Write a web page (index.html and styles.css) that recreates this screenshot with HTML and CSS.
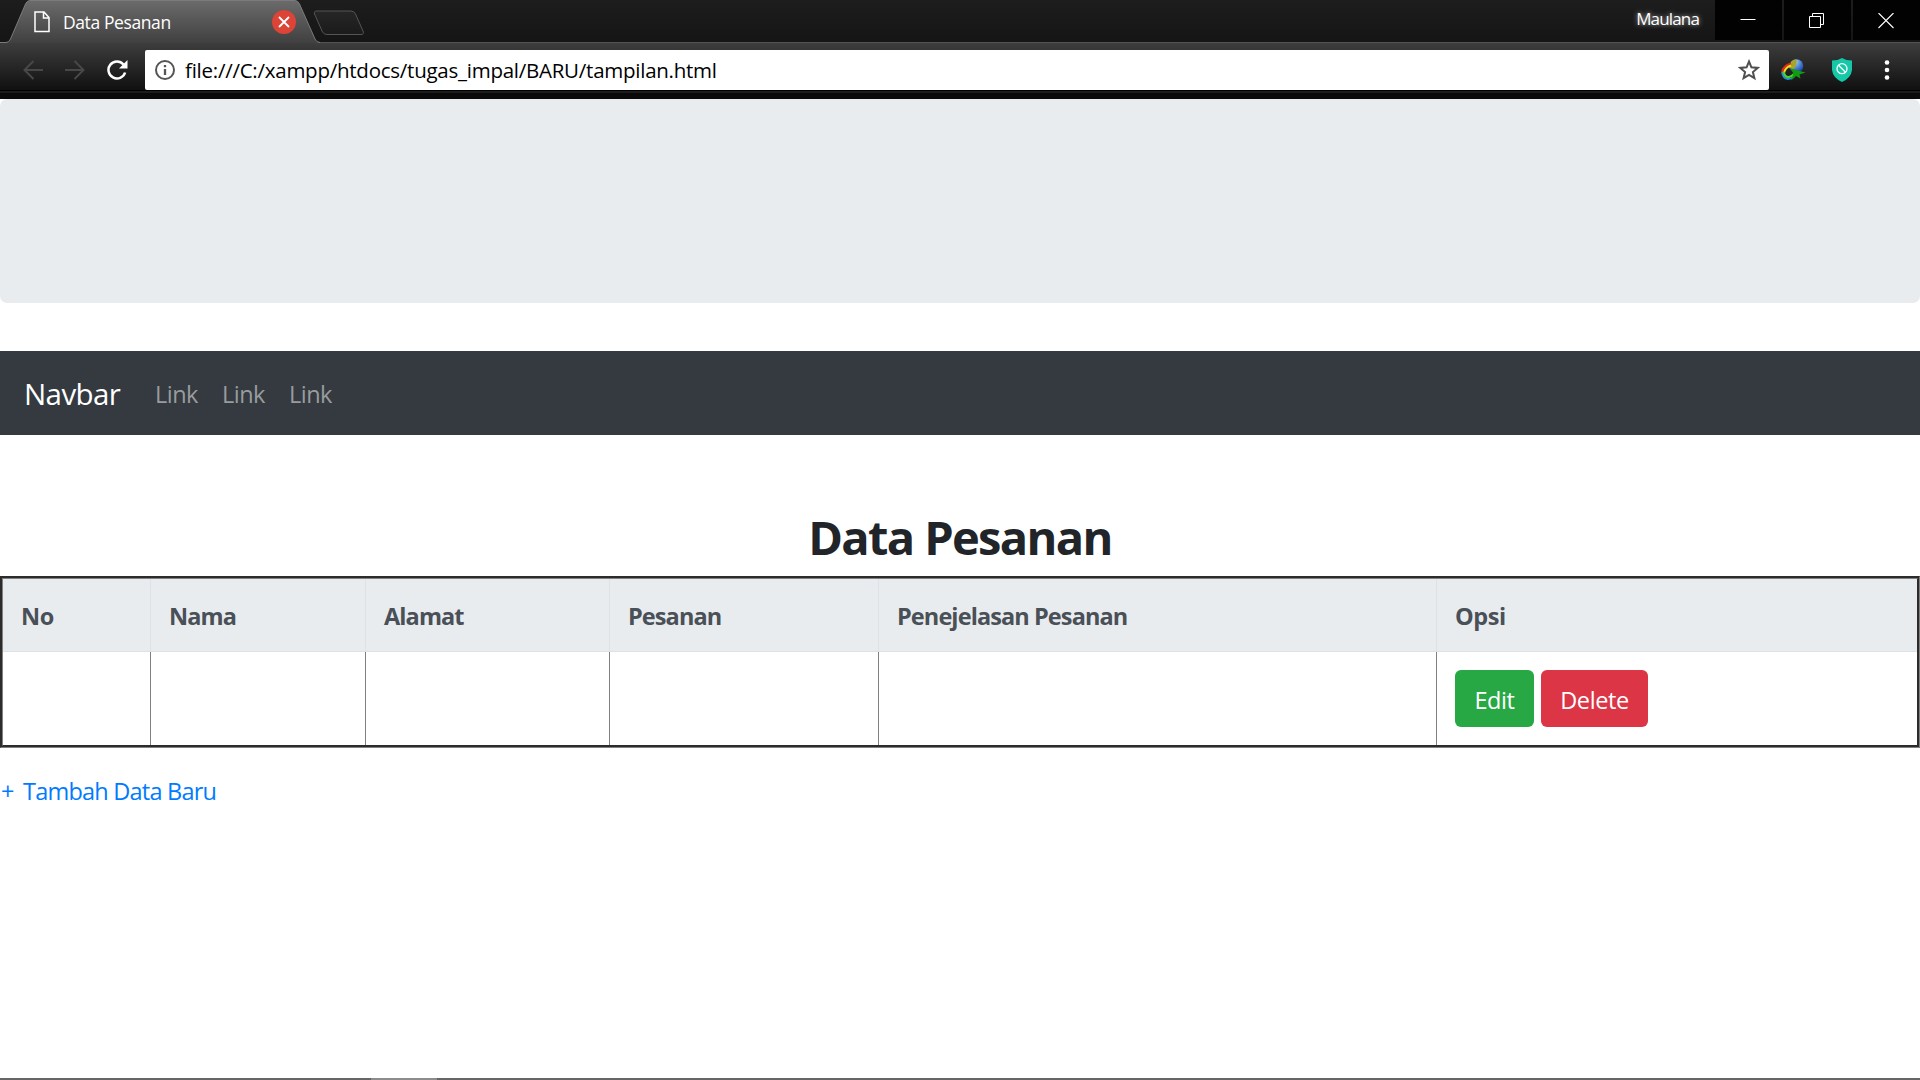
FILE: index.html
```
<!DOCTYPE html>
<html lang="id">
<head>
<meta charset="utf-8">
<title>Data Pesanan</title>
<link rel="stylesheet" href="styles.css">
</head>
<body>
<header class="browser">
  <div class="tabstrip">
    <div class="tab">
      <svg class="tab-shape" width="400" height="43" viewBox="0 0 400 43">
        <defs>
          <linearGradient id="tabfill" x1="0" y1="0" x2="0" y2="1"><stop offset="0" stop-color="#6b6b6b"/><stop offset="1" stop-color="#404040"/></linearGradient>
          <linearGradient id="newfill" x1="0" y1="0" x2="0" y2="1"><stop offset="0" stop-color="#262626"/><stop offset="1" stop-color="#1b1b1b"/></linearGradient>
        </defs>
        <path d="M0 43V42.500H6Q9 42.500 10.500 39L25.500 4Q27 .5 30 .5H295Q298 .5 299.500 4L315 39Q316.500 42.500 320 42.500V43Z" fill="url(#tabfill)"/>
        <path d="M0 42.500H6Q9 42.500 10.500 39L25.500 4Q27 .5 30 .5H295Q298 .5 299.500 4L315 39Q316.500 42.500 320 42.500" fill="none" stroke="#7b7b7b"/>
        <path d="M317 11H351Q354 11 355.500 14L363 31Q364.500 34.500 361 34.500H327Q324 34.500 322.500 32L314.500 14Q313.500 11 317 11Z" fill="url(#newfill)" stroke="#555"/>
      </svg>
      <svg class="tab-page" width="16" height="22" viewBox="0 0 16 22"><path d="M1 1H10L15 6.500V20.500H1ZM9.500 1V7H15" fill="none" stroke="#fff" stroke-width="1.500"/></svg>
      <span class="tab-title">Data Pesanan</span>
      <svg class="tab-close" width="24" height="24" viewBox="0 0 24 24"><circle cx="12" cy="12" r="12" fill="#db4437"/><path d="M7 7L17 17M17 7L7 17" stroke="#fff" stroke-width="1.800"/></svg>
    </div>
    <span class="user">Maulana</span>
    <div class="controls">
      <div class="control"><svg width="16" height="16" viewBox="0 0 16 16"><path d="M.5 6.500H15.500" stroke="#fff"/></svg></div>
      <div class="control"><svg width="16" height="16" viewBox="0 0 16 16"><path d="M.5 3.500H11.500V14.500H.5ZM3.500 3V.5H14.500V11.500H12" fill="none" stroke="#fff"/></svg></div>
      <div class="control"><svg width="16" height="16" viewBox="0 0 16 16"><path d="M.5 0L15.500 15M15.500 0L.5 15" stroke="#fff" stroke-width="1.100"/></svg></div>
    </div>
  </div>
  <div class="toolbar">
    <svg class="nav-icon back" width="20" height="20" viewBox="0 0 20 20"><path d="M20 10H2M10.500 1L1.500 10L10.500 19" fill="none" stroke="#484848" stroke-width="2"/></svg>
    <svg class="nav-icon forward" width="20" height="20" viewBox="0 0 20 20"><path d="M0 10H18M9.500 1L18.500 10L9.500 19" fill="none" stroke="#484848" stroke-width="2"/></svg>
    <svg class="nav-icon reload" width="22" height="20" viewBox="0 0 22 20"><path d="M16.500 4.500A8.500 8.500 0 1 0 18.100 12.500" fill="none" stroke="#fff" stroke-width="2.500"/><path d="M20.500 0V8.500H12Z" fill="#fff"/></svg>
    <div class="address">
      <svg class="info" width="22" height="22" viewBox="0 0 22 22"><circle cx="11" cy="11" r="9" fill="none" stroke="#555" stroke-width="2"/><path d="M11 10V16M11 6V8.300" stroke="#555" stroke-width="2.300"/></svg>
      <span class="url">file:///C:/xampp/htdocs/tugas_impal/BARU/tampilan.html</span>
      <svg class="star" width="22" height="22" viewBox="0 0 22 22"><path d="M11 2.500L13.400 8.300L19.700 8.900L14.900 13L16.400 19.200L11 15.900L5.600 19.200L7.100 13L2.300 8.900L8.600 8.300Z" fill="none" stroke="#505050" stroke-width="2"/></svg>
    </div>
    <svg class="ext idm" width="25" height="22" viewBox="0 0 25 22">
      <defs><radialGradient id="globe" cx=".35" cy=".2" r=".8"><stop offset="0" stop-color="#e8edc0"/><stop offset=".35" stop-color="#6fa3e8"/><stop offset="1" stop-color="#1746a8"/></radialGradient></defs>
      <circle cx="15.500" cy="7" r="6.800" fill="url(#globe)"/>
      <path d="M9.500 4Q12 0 15.500 1Q16.500 5 13 10L8 9Z" fill="#a6a52a"/>
      <path d="M10 4.500Q2 7 1.200 13" fill="none" stroke="#e32b16" stroke-width="2.200"/>
      <path d="M10 6.500Q4 8.500 3 14" fill="none" stroke="#f4dc20" stroke-width="2"/>
      <path d="M1 13Q2 19.500 7 20Q11 20 13.500 17" fill="none" stroke="#2890d8" stroke-width="1.800"/>
      <path d="M2.600 13Q4 18.500 8 18Q11 17.500 13 15" fill="none" stroke="#48d52c" stroke-width="2.200"/>
      <path d="M9.500 9.500L24.500 13.500L18.500 15.500L19.500 19.500L15 17L10 21.500L12.500 14.500Z" fill="#109b10"/>
    </svg>
    <svg class="ext shield" width="20" height="24" viewBox="0 0 20 24"><path d="M10 0Q14 2.500 20 2.500V12Q19 20 10 24Q1 20 0 12V2.500Q6 2.500 10 0Z" fill="#14c8a8"/><circle cx="10" cy="10.700" r="5" fill="none" stroke="#fff" stroke-width="1.300"/><path d="M6.500 7.200L13.500 14.200" stroke="#fff" stroke-width="1.300"/></svg>
    <svg class="ext dots" width="6" height="20" viewBox="0 0 6 20"><circle cx="3" cy="2.500" r="2.300" fill="#fff"/><circle cx="3" cy="10" r="2.300" fill="#fff"/><circle cx="3" cy="17.500" r="2.300" fill="#fff"/></svg>
  </div>
</header>
<main class="page">
  <div class="jumbotron"></div>
  <nav class="navbar">
    <a class="brand">Navbar</a>
    <a class="nav-link">Link</a>
    <a class="nav-link">Link</a>
    <a class="nav-link">Link</a>
  </nav>
  <h1 class="title">Data Pesanan</h1>
  <table class="orders">
    <colgroup><col class="c-no"><col class="c-nama"><col class="c-alamat"><col class="c-pesanan"><col class="c-detail"><col class="c-opsi"></colgroup>
    <thead><tr><th>No</th><th>Nama</th><th>Alamat</th><th>Pesanan</th><th>Penejelasan Pesanan</th><th>Opsi</th></tr></thead>
    <tbody><tr><td></td><td></td><td></td><td></td><td></td><td><div class="actions"><a class="btn edit">Edit</a><a class="btn delete">Delete</a></div></td></tr></tbody>
  </table>
  <a class="add"><span class="plus">+</span>Tambah Data Baru</a>
</main>
<footer class="taskbar"><div class="task"></div></footer>
</body>
</html>
```
FILE: styles.css
```
* { box-sizing: border-box; }
body {
  margin: 0;
  height: 1080px;
  overflow: hidden;
  display: flex;
  flex-direction: column;
  background: #fff;
  color: #212529;
  font-family: "Open Sans", "Noto Sans", sans-serif;
  font-size: 23.5px;
}
svg { display: block; flex: none; }
span, a { white-space: nowrap; }

/* Browser window frame */
.browser { height: 99px; flex: none; background: #0a0a0a; }
.tabstrip {
  height: 43px;
  display: flex;
  align-items: flex-start;
  background: linear-gradient(#1d1d1d, #151515);
  border-bottom: 1px solid #535353;
}
.tab { position: relative; width: 400px; height: 43px; display: flex; align-items: flex-start; padding-left: 34px; }
.tab-shape { position: absolute; left: 0; top: 0; }
.tab-page { position: relative; margin-top: 11px; }
.tab-title { position: relative; width: 209px; margin-left: 13px; color: #fff; font-size: 17.5px; line-height: 30px; margin-top: 7px; letter-spacing: -0.4px; }
.tab-close { position: relative; margin-top: 10px; }
.user { margin-left: auto; margin-right: 16px; color: #fff; font-size: 17px; line-height: 30px; margin-top: 4px; letter-spacing: -0.85px; text-shadow: 0 0 5px #bbb; }
.controls { display: flex; gap: 2px; width: 205px; }
.control { flex: 1; height: 40px; padding: 13px 2px 0 0; background: #020202; display: flex; justify-content: center; align-items: flex-start; }
.toolbar {
  height: 50px;
  display: flex;
  align-items: flex-start;
  padding-left: 23px;
  background: linear-gradient(#3d3d3d, #101010 47px, #000 47px, #000 48px, #1c1c1c 48px);
}
.nav-icon { margin-top: 17px; }
.forward { margin-left: 22px; }
.reload { margin-left: 22px; }
.address {
  width: 1624px;
  height: 40px;
  margin: 7px 0 0 16px;
  padding: 0 9px;
  background: #fff;
  border-radius: 2px;
  display: flex;
  align-items: center;
}
.url { margin-left: 9px; color: #000; font-size: 20.5px; line-height: 40px; letter-spacing: -0.25px; }
.star { margin-left: auto; }
.idm { margin: 16px 0 0 12px; }
.shield { margin: 15px 0 0 26px; }
.dots { margin: 17px 0 0 32px; }

/* Page content */
.page { flex: 1; display: flex; flex-direction: column; }
.jumbotron { height: 204px; margin-bottom: 48px; border-radius: 7px; background: #e9ecef; }
.navbar { height: 84px; display: flex; align-items: center; padding: 2px 24px 0; background: #343a40; line-height: 36px; }
.brand { width: 131px; color: #fff; font-size: 29.5px; letter-spacing: -0.6px; }
.nav-link { width: 67px; color: #999c9f; letter-spacing: -0.5px; }
.title { margin: 66px 0 3px; height: 72px; line-height: 72px; font-size: 47px; font-weight: 700; text-align: center; letter-spacing: -1.65px; }
.orders { width: 1920px; height: 172px; table-layout: fixed; border: 3px groove #808080; border-spacing: 0; }
.c-no { width: 148px; }
.c-nama { width: 215px; }
.c-alamat { width: 244px; }
.c-pesanan { width: 269px; }
.c-detail { width: 558px; }
.c-opsi { width: 480px; }
.orders th, .orders td { padding: 0 18px; text-align: left; vertical-align: middle; }
.orders th { height: 73px; background: #e9ecef; color: #495057; border-right: 1px solid #dee2e6; border-bottom: 1px solid #dee2e6; line-height: 36px; padding-top: 2px; letter-spacing: -0.9px; }
.orders th:first-child, .orders th:last-child { letter-spacing: -0.4px; }
.orders td { height: 93px; border-right: 1px solid #808080; }
.orders th:last-child, .orders td:last-child { border-right: 0; }
.actions { display: flex; gap: 7px; }
.btn { height: 57px; line-height: 61px; border-radius: 6px; color: #fff; text-align: center; letter-spacing: -0.4px; }
.edit { width: 79px; background: #28a745; }
.delete { width: 107px; background: #dc3545; }
.add { margin: 25px 0 0 1px; line-height: 36px; color: #007bff; letter-spacing: -0.78px; }
.plus { display: inline-block; width: 22px; }
.taskbar { height: 2px; flex: none; background: #666; padding-left: 371px; }
.task { width: 66px; height: 2px; background: #8c8c8c; }
```
